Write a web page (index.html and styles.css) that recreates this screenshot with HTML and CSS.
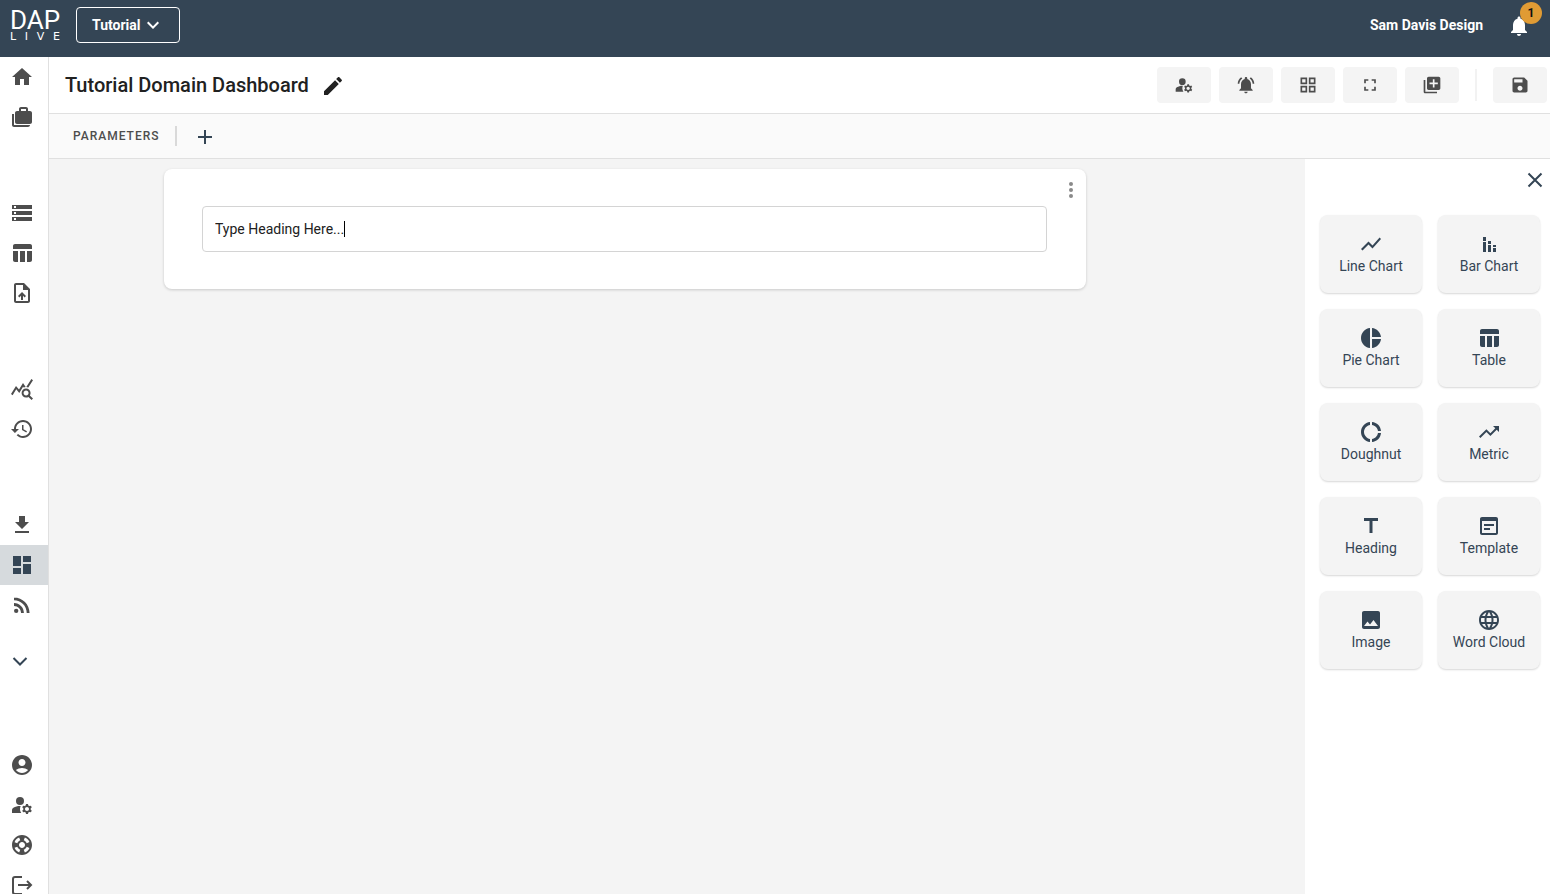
FILE: index.html
```html
<!DOCTYPE html>
<html lang="en">
<head>
	<meta charset="UTF-8">
	<meta name="viewport" content="width=device-width">
	<title>Tutorial Domain Dashboard</title>
	<link rel="stylesheet" href="styles.css">
</head>
<body>
<header class="topbar">
	<a class="logo" href="#" aria-label="DAP Live">
		<span class="logo-top">DAP</span>
		<span class="logo-sub"><span>L</span><span>I</span><span>V</span><span>E</span></span>
	</a>
	<button class="domain-btn" type="button">Tutorial
		<svg class="icon" viewBox="0 0 24 24"><path d="M16.59 8.59L12 13.17 7.41 8.59 6 10l6 6 6-6z"/></svg>
	</button>
	<span class="user-name">Sam Davis Design</span>
	<button class="bell" type="button" aria-label="Notifications">
		<svg class="icon" viewBox="0 0 24 24"><path d="M12 22c1.1 0 2-.9 2-2h-4c0 1.1.89 2 2 2zm6-6v-5c0-3.07-1.64-5.64-4.5-6.32V4c0-.83-.67-1.5-1.5-1.5s-1.5.67-1.5 1.5v.68C7.63 5.36 6 7.92 6 11v5l-2 2v1h16v-1z"/></svg>
		<span class="badge">1</span>
	</button>
</header>
<div class="shell">
	<nav class="sidebar">
		<div class="nav-group">
			<a href="#" aria-label="Home"><svg class="icon" viewBox="0 0 24 24"><path d="M10 20v-6h4v6h5v-8h3L12 3 2 12h3v8z"/></svg></a>
			<a href="#" aria-label="Domains"><svg class="icon" viewBox="0 0 24 24"><path d="M4 9H2v11c0 1.1.9 2 2 2h14c1.1 0 2-.9 2-2H4V9zM20 6h-2V4c0-1.1-.9-2-2-2h-5c-1.1 0-2 .9-2 2v2H7c-1.1 0-2 .9-2 2v9c0 1.1.9 2 2 2h13c1.1 0 2-.9 2-2V8c0-1.1-.9-2-2-2zm-4 0h-5V4h5v2z"/></svg></a>
		</div>
		<div class="nav-group">
			<a href="#" aria-label="Storage"><svg class="icon" viewBox="0 0 24 24"><path d="M2 20h20v-4H2v4zm2-3h2v2H4v-2zM2 4v4h20V4H2zm4 3H4V5h2v2zm-4 7h20v-4H2v4zm2-3h2v2H4v-2z"/></svg></a>
			<a href="#" aria-label="Tables"><svg class="icon" viewBox="0 0 24 24"><path d="M10 10h5v11h-5V10zM17 21h3c1.1 0 2-.9 2-2v-9h-5v11zm3-18H5c-1.1 0-2 .9-2 2v3h19V5c0-1.1-.9-2-2-2zM3 19c0 1.1.9 2 2 2h3V10H3v9z"/></svg></a>
			<a href="#" aria-label="Upload"><svg class="icon" viewBox="0 0 24 24"><path d="M14 2H6c-1.1 0-2 .9-2 2v16c0 1.1.9 2 2 2h12c1.1 0 2-.9 2-2V8l-6-6zm4 18H6V4h7v5h5v11zM8 15.01l1.41 1.41L11 14.84V19h2v-4.16l1.59 1.59L16 15.01 12.01 11z"/></svg></a>
		</div>
		<div class="nav-group">
			<a href="#" aria-label="Query"><svg class="icon" viewBox="0 0 24 24"><path d="M19.88 18.47c.44-.7.7-1.51.7-2.39 0-2.49-2.01-4.5-4.5-4.5s-4.5 2.01-4.5 4.5 2.01 4.5 4.49 4.5c.88 0 1.7-.26 2.39-.7L21.58 23 23 21.58l-3.12-3.11zm-3.8.11c-1.38 0-2.5-1.12-2.5-2.5s1.12-2.5 2.5-2.5 2.5 1.12 2.5 2.5-1.12 2.5-2.5 2.5zm-.36-8.5c-.74.02-1.45.18-2.1.45l-.55-.83-3.8 6.18-3.01-3.52-3.63 5.81L1 17l5-8 3 3.5L13 6l2.72 4.08zm2.59.5c-.64-.28-1.33-.45-2.05-.49L21.38 2 23 3.18l-4.69 7.4z"/></svg></a>
			<a href="#" aria-label="History"><svg class="icon" viewBox="0 0 24 24"><path d="M13 3c-4.97 0-9 4.03-9 9H1l3.89 3.89.07.14L9 12H6c0-3.87 3.13-7 7-7s7 3.13 7 7-3.13 7-7 7c-1.93 0-3.68-.79-4.94-2.06l-1.42 1.42C8.27 19.99 10.51 21 13 21c4.97 0 9-4.03 9-9s-4.03-9-9-9zm-1 5v5l4.28 2.54.72-1.21-3.5-2.08V8H12z"/></svg></a>
		</div>
		<div class="nav-group">
			<a href="#" aria-label="Downloads"><svg class="icon" viewBox="0 0 24 24"><path d="M19 9h-4V3H9v6H5l7 7 7-7zM5 18v2h14v-2H5z"/></svg></a>
			<a href="#" aria-label="Dashboards" class="active"><svg class="icon" viewBox="0 0 24 24"><path d="M3 13h8V3H3v10zm0 8h8v-6H3v6zm10 0h8V11h-8v10zm0-18v6h8V3h-8z"/></svg></a>
			<a href="#" aria-label="Feeds"><svg class="icon" viewBox="0 0 24 24"><circle cx="6.18" cy="17.82" r="2.18"/><path d="M4 4.44v2.83c7.03 0 12.73 5.7 12.73 12.73h2.83c0-8.59-6.97-15.56-15.56-15.56zm0 5.66v2.83c3.9 0 7.07 3.17 7.07 7.07h2.83c0-5.47-4.43-9.9-9.9-9.9z"/></svg></a>
		</div>
		<button class="nav-more" type="button" aria-label="Show more"><svg class="icon line" viewBox="0 0 24 24"><path d="M5.5 9l6.5 6.5L18.5 9"/></svg></button>
		<div class="nav-group">
			<a href="#" aria-label="Account"><svg class="icon" viewBox="0 0 24 24"><path d="M12 2C6.48 2 2 6.48 2 12s4.48 10 10 10 10-4.48 10-10S17.52 2 12 2zm0 4c1.93 0 3.5 1.57 3.5 3.5S13.93 13 12 13s-3.5-1.57-3.5-3.5S10.07 6 12 6zm0 14c-2.03 0-4.43-.82-6.14-2.88C7.55 15.8 9.68 15 12 15s4.45.8 6.14 2.12C16.43 19.18 14.03 20 12 20z"/></svg></a>
			<a href="#" aria-label="Manage users"><svg class="icon" viewBox="0 0 24 24"><use href="#i-manage"/></svg></a>
			<a href="#" aria-label="Support"><svg class="icon" viewBox="0 0 24 24"><path d="M12 2C6.48 2 2 6.48 2 12s4.48 10 10 10 10-4.48 10-10S17.52 2 12 2zm7.46 7.12l-2.78 1.15c-.51-1.36-1.58-2.44-2.95-2.94l1.15-2.78c2.1.8 3.77 2.47 4.58 4.57zM12 15c-1.66 0-3-1.34-3-3s1.34-3 3-3 3 1.34 3 3-1.34 3-3 3zM9.13 4.54l1.17 2.78c-1.38.5-2.47 1.59-2.98 2.97L4.54 9.13c.81-2.11 2.48-3.78 4.59-4.59zM4.54 14.87l2.78-1.15c.51 1.38 1.59 2.46 2.97 2.96l-1.17 2.78c-2.1-.81-3.77-2.48-4.58-4.59zm10.34 4.59l-1.15-2.78c1.37-.51 2.45-1.59 2.95-2.97l2.78 1.17c-.81 2.1-2.48 3.77-4.58 4.58z"/></svg></a>
			<a href="#" aria-label="Log out"><svg class="icon line" viewBox="0 0 24 24"><path d="M12 4H5Q3 4 3 6v13q0 2 2 2h7M8 12h13M17 8l4 4-4 4"/></svg></a>
		</div>
	</nav>
	<main class="page">
		<div class="titlebar">
			<h1>Tutorial Domain Dashboard</h1>
			<button class="edit-btn" type="button" aria-label="Rename"><svg class="icon" viewBox="0 0 24 24"><path d="M3 17.25V21h3.75L17.81 9.94l-3.75-3.75L3 17.25zM20.71 7.04c.39-.39.39-1.02 0-1.41l-2.34-2.34c-.39-.39-1.02-.39-1.41 0l-1.83 1.83 3.75 3.75 1.83-1.83z"/></svg></button>
			<div class="tools">
				<button type="button" aria-label="Permissions"><svg class="icon" viewBox="0 0 24 24"><g id="i-manage"><circle cx="10" cy="8" r="4"/><path d="M10.67 13.02C10.45 13.01 10.23 13 10 13c-2.42 0-4.68.67-6.61 1.82-.88.52-1.39 1.5-1.39 2.53V20h9.26c-.79-1.13-1.26-2.51-1.26-4 0-1.07.25-2.07.67-2.98zM20.75 16c0-.22-.03-.42-.06-.63l1.14-1.01-1-1.73-1.45.49c-.32-.27-.68-.48-1.08-.63L18 11h-2l-.3 1.49c-.4.15-.76.36-1.08.63l-1.45-.49-1 1.73 1.14 1.01c-.03.21-.06.41-.06.63s.03.42.06.63l-1.14 1.01 1 1.73 1.45-.49c.32.27.68.48 1.08.63L16 21h2l.3-1.49c.4-.15.76-.36 1.08-.63l1.45.49 1-1.73-1.14-1.01c.03-.21.06-.41.06-.63zM17 18c-1.1 0-2-.9-2-2s.9-2 2-2 2 .9 2 2-.9 2-2 2z"/></g></svg></button>
				<button type="button" aria-label="Alerts"><svg class="icon" viewBox="0 0 24 24"><path d="M7.58 4.08L6.15 2.65C3.75 4.48 2.17 7.3 2.03 10.5h2c.15-2.65 1.51-4.97 3.55-6.42zm12.39 6.42h2c-.15-3.2-1.73-6.02-4.12-7.85l-1.42 1.43c2.02 1.45 3.39 3.77 3.54 6.42zM18 11c0-3.07-1.64-5.64-4.5-6.32V4c0-.83-.67-1.5-1.5-1.5s-1.5.67-1.5 1.5v.68C7.63 5.36 6 7.92 6 11v5l-2 2v1h16v-1l-2-2v-5zm-6 11c.14 0 .27-.01.4-.04.65-.14 1.18-.58 1.44-1.18.1-.24.15-.5.15-.78h-4c.01 1.1.9 2 2.01 2z"/></svg></button>
				<button type="button" aria-label="Widgets"><svg class="icon" viewBox="0 0 24 24"><path fill-rule="evenodd" d="M3 3v8h8V3H3zm6 6H5V5h4v4zm-6 4v8h8v-8H3zm6 6H5v-4h4v4zm4-16v8h8V3h-8zm6 6h-4V5h4v4zm-6 4v8h8v-8h-8zm6 6h-4v-4h4v4z"/></svg></button>
				<button type="button" aria-label="Full screen"><svg class="icon" viewBox="0 0 24 24"><path d="M7 14H5v5h5v-2H7v-3zm-2-4h2V7h3V5H5v5zm12 7h-3v2h5v-5h-2v3zM14 5v2h3v3h2V5h-5z"/></svg></button>
				<button type="button" aria-label="Duplicate"><svg class="icon" viewBox="0 0 24 24"><path d="M4 6H2v14c0 1.1.9 2 2 2h14v-2H4V6zm16-4H8c-1.1 0-2 .9-2 2v12c0 1.1.9 2 2 2h12c1.1 0 2-.9 2-2V4c0-1.1-.9-2-2-2zm-1 9h-4v4h-2v-4H9V9h4V5h2v4h4v2z"/></svg></button>
				<span class="tools-sep"></span>
				<button type="button" aria-label="Save"><svg class="icon" viewBox="0 0 24 24"><path d="M17 3H5c-1.11 0-2 .9-2 2v14c0 1.1.89 2 2 2h14c1.1 0 2-.9 2-2V7l-4-4zm-5 16c-1.66 0-3-1.34-3-3s1.34-3 3-3 3 1.34 3 3-1.34 3-3 3zm3-10H5V5h10v4z"/></svg></button>
			</div>
		</div>
		<div class="params">
			<span class="params-label">PARAMETERS</span>
			<button class="add-btn" type="button" aria-label="Add parameter"><svg class="icon line" viewBox="0 0 24 24"><path d="M12 5v14M5 12h14"/></svg></button>
		</div>
		<div class="workspace">
			<section class="canvas">
				<div class="card">
					<button class="card-menu" type="button" aria-label="Card menu"><svg class="icon" viewBox="0 0 24 24"><circle cx="12" cy="6" r="2"/><circle cx="12" cy="12" r="2"/><circle cx="12" cy="18" r="2"/></svg></button>
					<div class="heading-field">
						<input class="heading-input" type="text" aria-label="Heading" value="Type Heading Here...">
						<span class="caret"></span>
					</div>
				</div>
			</section>
			<aside class="palette">
				<button class="close-btn" type="button" aria-label="Close"><svg class="icon line" viewBox="0 0 24 24"><path d="M5.5 5.5l13 13M18.5 5.5l-13 13"/></svg></button>
				<div class="tiles">
					<button type="button"><svg class="icon" viewBox="0 0 24 24"><path d="M3.5 18.49l6-6.01 4 4L22 6.92l-1.41-1.41-7.09 7.97-4-4L2 16.99z"/></svg>Line Chart</button>
					<button type="button"><svg class="icon" viewBox="0 0 24 24"><path d="M6 10h3v10H6zM6 5h3v4H6zm10 11h3v4h-3zm0-3h3v2h-3zm-5 0h3v7h-3zm0-4h3v3h-3z"/></svg>Bar Chart</button>
					<button type="button"><svg class="icon" viewBox="0 0 24 24"><path d="M11 2v20c-5.07-.5-9-4.79-9-10s3.93-9.5 9-10zm2.03 0v8.99H22c-.47-4.74-4.24-8.52-8.97-8.99zm0 11.01V22c4.74-.47 8.5-4.25 8.97-8.99h-8.97z"/></svg>Pie Chart</button>
					<button type="button"><svg class="icon" viewBox="0 0 24 24"><path d="M10 10h5v11h-5V10zM17 21h3c1.1 0 2-.9 2-2v-9h-5v11zm3-18H5c-1.1 0-2 .9-2 2v3h19V5c0-1.1-.9-2-2-2zM3 19c0 1.1.9 2 2 2h3V10H3v9z"/></svg>Table</button>
					<button type="button"><svg class="icon" viewBox="0 0 24 24"><path d="M11 5.08V2c-5 .5-9 4.81-9 10s4 9.5 9 10v-3.08c-3-.48-6-3.4-6-6.92s3-6.44 6-6.92zM18.97 11H22c-.47-5-4-8.53-9-9v3.08C16 5.51 18.54 8 18.97 11zM13 18.92V22c5-.47 8.53-4 9-9h-3.03c-.43 3-2.97 5.49-5.97 5.92z"/></svg>Doughnut</button>
					<button type="button"><svg class="icon" viewBox="0 0 24 24"><path d="M16 6l2.29 2.29-4.88 4.88-4-4L2 16.59 3.41 18l6-6 4 4 6.3-6.29L22 12V6z"/></svg>Metric</button>
					<button type="button"><svg class="icon" viewBox="0 0 24 24"><path d="M5 4v3h5.5v12h3V7H19V4z"/></svg>Heading</button>
					<button type="button"><svg class="icon" viewBox="0 0 24 24"><path d="M19 3H5c-1.11 0-2 .9-2 2v14c0 1.1.89 2 2 2h14c1.1 0 2-.9 2-2V5c0-1.1-.89-2-2-2zm0 16H5V7h14v12zM17 12H7v-2h10v2zm-4 4H7v-2h6v2z"/></svg>Template</button>
					<button type="button"><svg class="icon" viewBox="0 0 24 24"><path d="M21 19V5c0-1.1-.9-2-2-2H5c-1.1 0-2 .9-2 2v14c0 1.1.9 2 2 2h14c1.1 0 2-.9 2-2zM8.5 13.5l2.5 3.01L14.5 12l4.5 6H5l3.5-4.5z"/></svg>Image</button>
					<button type="button"><svg class="icon" viewBox="0 0 24 24"><path d="M11.99 2C6.47 2 2 6.48 2 12s4.47 10 9.99 10C17.52 22 22 17.52 22 12S17.52 2 11.99 2zm6.93 6h-2.95c-.32-1.25-.78-2.45-1.38-3.56 1.84.63 3.37 1.91 4.33 3.56zM12 4.04c.83 1.2 1.48 2.53 1.91 3.96h-3.82c.43-1.43 1.08-2.76 1.91-3.96zM4.26 14C4.1 13.36 4 12.69 4 12s.1-1.36.26-2h3.38c-.08.66-.14 1.32-.14 2 0 .68.06 1.34.14 2H4.26zm.82 2h2.95c.32 1.25.78 2.45 1.38 3.56-1.84-.63-3.37-1.9-4.33-3.56zm2.95-8H5.08c.96-1.66 2.49-2.93 4.33-3.56C8.81 5.55 8.35 6.75 8.03 8zM12 19.96c-.83-1.2-1.48-2.53-1.91-3.96h3.82c-.43 1.43-1.08 2.76-1.91 3.96zM14.34 14H9.66c-.09-.66-.16-1.32-.16-2 0-.68.07-1.35.16-2h4.68c.09.65.16 1.32.16 2 0 .68-.07 1.34-.16 2zm.25 5.56c.6-1.11 1.06-2.31 1.38-3.56h2.95c-.96 1.65-2.49 2.93-4.33 3.56zM16.36 14c.08-.66.14-1.32.14-2 0-.68-.06-1.34-.14-2h3.38c.16.64.26 1.31.26 2s-.1 1.36-.26 2h-3.38z"/></svg>Word Cloud</button>
				</div>
			</aside>
		</div>
	</main>
</div>
</body>
</html>
```

FILE: styles.css
```css
* {box-sizing:border-box;}
body {
	margin:0;
	height:100vh;
	display:flex;
	flex-direction:column;
	overflow:hidden;
	font:14px/20px Roboto, "Liberation Sans", sans-serif;
	color:#212121;
	background-color:#fff;
}
button {
	display:flex;
	align-items:center;
	justify-content:center;
	margin:0;
	padding:0;
	border:none;
	background:none;
	font:inherit;
	color:inherit;
	cursor:pointer;
}
a {color:inherit;text-decoration:none;}
.icon {display:block;flex:none;width:24px;height:24px;fill:currentColor;}
.line {fill:none;stroke:currentColor;stroke-width:2;}

/* top bar */
.topbar {
	flex:none;
	display:flex;
	align-items:center;
	padding:7px 19px 14px 10px;
	background-color:#344555;
	color:#fff;
}
.logo {width:50px;margin-right:16px;}
.logo-top {display:block;font-size:26px;line-height:24px;}
.logo-sub {display:flex;justify-content:space-between;font:11px/10px "DejaVu Sans", sans-serif;}
.domain-btn {
	height:36px;
	padding:0 14px 0 15px;
	border:1px solid #fff;
	border-radius:4px;
	font-weight:700;
}
.user-name {margin-left:auto;font-weight:700;}
.bell {position:relative;margin:2px 0 0 24px;}
.badge {
	position:absolute;
	left:13px;
	top:-12px;
	width:22px;
	height:22px;
	border-radius:50%;
	background-color:#e09b34;
	color:#111;
	font-size:12px;
	font-weight:700;
	line-height:22px;
}

.shell {flex:1;min-height:0;display:flex;}

/* sidebar */
.sidebar {
	flex:none;
	width:49px;
	border-right:1px solid #e0e0e0;
	color:#4d4d4d;
	overflow:hidden;
}
.nav-group {margin-bottom:56px;}
.nav-group a {display:flex;align-items:center;height:40px;padding-left:10px;}
.nav-group .active {background-color:#d6dadd;color:#344555;}
.nav-more {width:40px;height:40px;margin:-40px 0 64px;color:#344555;}

/* page header */
.page {flex:1;min-width:0;display:flex;flex-direction:column;}
.titlebar {
	flex:none;
	display:flex;
	align-items:center;
	padding:10px 3px 10px 16px;
	border-bottom:1px solid #e0e0e0;
}
h1 {margin:0;font-size:20px;font-weight:500;line-height:24px;}
.edit-btn {margin:2px 0 0 12px;}
.tools {display:flex;align-items:center;gap:8px;margin-left:auto;color:#4d4d4d;}
.tools button {width:54px;height:36px;border-radius:4px;background-color:#f4f4f4;}
.tools .icon {width:20px;height:20px;}
.tools-sep {width:2px;height:32px;margin:0 8px;background-color:#f2f2f2;}
.params {
	flex:none;
	display:flex;
	align-items:center;
	height:45px;
	padding-left:24px;
	border-bottom:1px solid #e0e0e0;
	background-color:#fafafa;
}
.params-label {
	padding-right:15px;
	border-right:2px solid #d9d9d9;
	color:#4d4d4d;
	font-size:12px;
	font-weight:500;
	letter-spacing:1px;
}
.add-btn {margin:2px 0 0 16px;color:#344555;}

/* canvas */
.workspace {flex:1;min-height:0;display:flex;}
.canvas {flex:1;min-width:0;padding:10px 219px 10px 115px;background-color:#f4f4f4;}
.card {
	position:relative;
	padding:37px 39px 37px 38px;
	border-radius:8px;
	background-color:#fff;
	box-shadow:0 1px 3px rgba(0,0,0,.18);
}
.card-menu {position:absolute;top:9px;right:3px;color:#8a8a8a;}
.heading-field {position:relative;}
.heading-input {
	display:block;
	width:100%;
	height:46px;
	padding:0 12px;
	border:1px solid #d4d4d4;
	border-radius:4px;
	outline:none;
	background-color:#fff;
	color:#212121;
	font:inherit;
}
/* sits at the end of the heading text */
.caret {position:absolute;left:142px;top:15px;width:1px;height:16px;background-color:#000;}

/* widget palette */
.palette {flex:none;width:245px;padding:9px 10px 0 15px;color:#344555;}
.close-btn {margin:0 -7px 23px auto;}
.tiles {display:grid;grid-template-columns:1fr 1fr;gap:16px;}
.tiles button {
	flex-direction:column;
	height:78px;
	border-radius:8px;
	background-color:#f4f4f4;
	box-shadow:0 1px 2px rgba(0,0,0,.16);
}
```
